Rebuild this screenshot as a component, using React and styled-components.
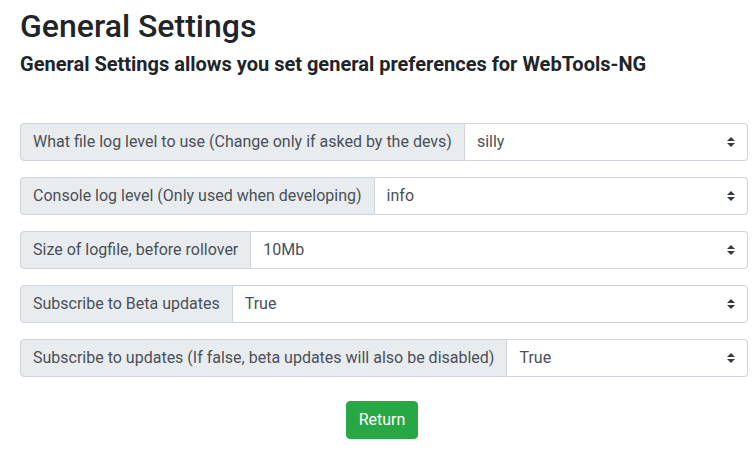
import React from "react";
import styled, { createGlobalStyle } from "styled-components";

const GlobalStyle = createGlobalStyle`
  *, *::before, *::after { box-sizing: border-box; }
  html, body { margin: 0; padding: 0; background: #fff; }
  body {
    font-family: Roboto, "Liberation Sans", Arial, sans-serif;
    font-size: 16px;
    line-height: 1.5;
    color: #212529;
  }
`;

const Page = styled.div`
  padding: 7px 6px 0 20px;
  width: 754px;
`;

const Title = styled.h2`
  margin: 0 0 7px;
  font-size: 32px;
  font-weight: 500;
  line-height: 1.2;
  color: #212529;
`;

const Subtitle = styled.h5`
  margin: 0 0 47px;
  font-size: 20px;
  font-weight: 700;
  line-height: 24px;
  color: #212529;
`;

const Form = styled.div`
  display: flex;
  flex-direction: column;
  gap: 16px;
`;

const InputGroup = styled.div`
  display: flex;
  align-items: stretch;
  width: 100%;
  height: 38px;
`;

const Label = styled.span`
  display: flex;
  align-items: center;
  padding: 6px 12px;
  white-space: nowrap;
  color: #495057;
  background: #e9ecef;
  border: 1px solid #ced4da;
  border-radius: 4px 0 0 4px;
  font-size: 16px;
  line-height: 1.5;
`;

const SelectWrap = styled.div`
  position: relative;
  flex: 1 1 auto;
  min-width: 0;
`;

const Select = styled.select`
  appearance: none;
  -webkit-appearance: none;
  width: 100%;
  height: 38px;
  margin: 0;
  padding: 6px 28px 6px 12px;
  font-family: inherit;
  font-size: 16px;
  line-height: 1.5;
  color: #495057;
  background: #fff;
  border: 1px solid #ced4da;
  border-left: 0;
  border-radius: 0 4px 4px 0;
  outline: none;
`;

const Arrow = styled.svg`
  position: absolute;
  right: 13px;
  top: 50%;
  margin-top: -5px;
  width: 8px;
  height: 10px;
  pointer-events: none;
`;

const Actions = styled.div`
  display: flex;
  justify-content: center;
  padding-right: 4px;
  margin-top: 24px;
`;

const Button = styled.button`
  font-family: inherit;
  font-size: 16px;
  line-height: 1.5;
  font-weight: 400;
  color: #fff;
  background: #28a745;
  border: 1px solid #28a745;
  border-radius: 4px;
  padding: 6px 12px;
  height: 38px;
  cursor: pointer;
`;

const settings = [
  { label: "What file log level to use (Change only if asked by the devs)", value: "silly", options: ["error", "warn", "info", "verbose", "debug", "silly"] },
  { label: "Console log level (Only used when developing)", value: "info", options: ["error", "warn", "info", "verbose", "debug", "silly"] },
  { label: "Size of logfile, before rollover", value: "10Mb", options: ["1Mb", "5Mb", "10Mb", "20Mb"] },
  { label: "Subscribe to Beta updates", value: "True", options: ["True", "False"] },
  { label: "Subscribe to updates (If false, beta updates will also be disabled)", value: "True", options: ["True", "False"] },
];

function SettingRow({ label, value, options }) {
  return (
    <InputGroup>
      <Label>{label}</Label>
      <SelectWrap>
        <Select defaultValue={value}>
          {options.map((o) => (
            <option key={o} value={o}>{o}</option>
          ))}
        </Select>
        <Arrow viewBox="0 0 4 5" aria-hidden="true">
          <path fill="#343a40" d="M2 0L0 2h4zm0 5L0 3h4z" />
        </Arrow>
      </SelectWrap>
    </InputGroup>
  );
}

export default function App() {
  return (
    <Page>
      <GlobalStyle />
      <Title>General Settings</Title>
      <Subtitle>General Settings allows you set general preferences for WebTools-NG</Subtitle>
      <Form>
        {settings.map((s) => (
          <SettingRow key={s.label} {...s} />
        ))}
      </Form>
      <Actions>
        <Button type="button">Return</Button>
      </Actions>
    </Page>
  );
}
